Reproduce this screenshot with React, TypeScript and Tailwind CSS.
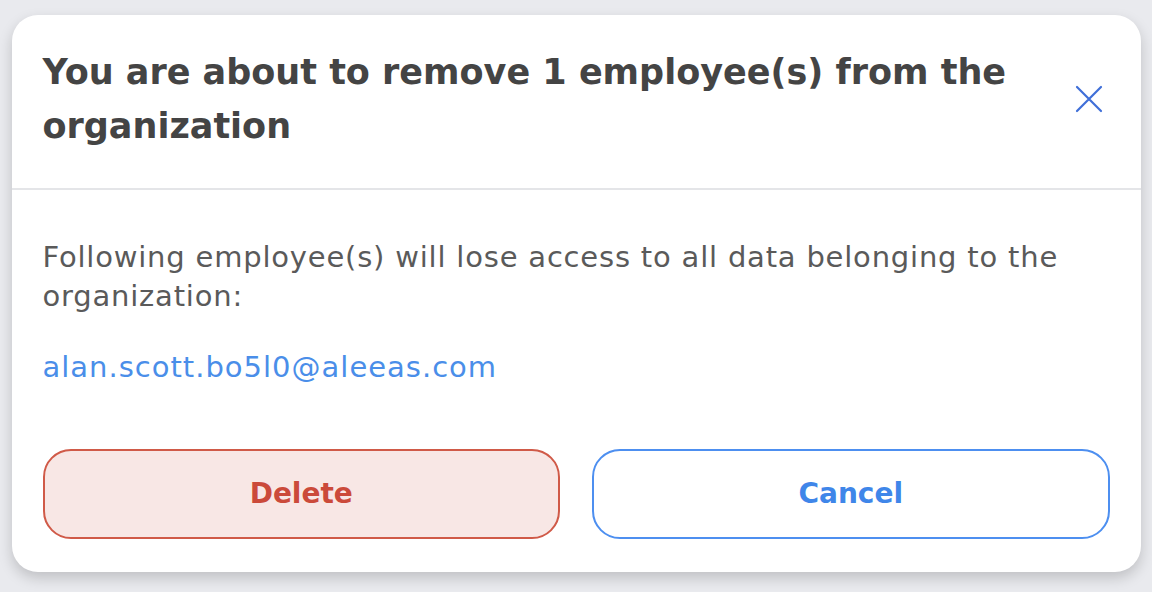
export default function App() {
  return (
    <div
      className="min-h-screen w-full bg-[#e9eaee] pt-[15px] px-[10px] pb-[20px]"
      style={{ fontFamily: '"DejaVu Sans", "Open Sans", sans-serif' }}
    >
      <div className="mx-auto w-[1129px] rounded-[26px] bg-white shadow-[0_6px_14px_rgba(0,0,0,0.18)]">
        {/* Header */}
        <div className="flex items-center justify-between pl-[31px] pr-[38px] pt-[30px] pb-[35px] border-b-2 border-[#e4e5e8]">
          <h2 className="w-[1000px] text-[35px] leading-[54px] font-bold text-[#444444]">
            You are about to remove 1 employee(s) from the organization
          </h2>
          <button aria-label="Close" className="text-[#3f6fd8]">
            <svg width="28" height="28" viewBox="0 0 28 28" fill="none" stroke="currentColor" strokeWidth="2.2" strokeLinecap="round">
              <path d="M2 2L26 26M26 2L2 26" />
            </svg>
          </button>
        </div>

        {/* Body */}
        <div className="px-[31px] pt-[48px] pb-[33px]">
          <p className="text-[29px] leading-[39px] tracking-[0.8px] text-[#5a5a5a]">
            Following employee(s) will lose access to all data belonging to the organization:
          </p>
          <p className="mt-[32px] text-[29px] leading-[39px] tracking-[1px] text-[#4a8ee9]">alan.scott.bo5l0@aleeas.com</p>

          <div className="mt-[62px] grid grid-cols-2 gap-[32px]">
            <button className="h-[90px] rounded-[28px] border-2 border-[#d05a48] bg-[#f8e7e5] text-[28px] font-bold text-[#cb4a3a]">
              Delete
            </button>
            <button className="h-[90px] rounded-[28px] border-2 border-[#4d8ff0] bg-white text-[28px] font-bold text-[#3f86e9]">
              Cancel
            </button>
          </div>
        </div>
      </div>
    </div>
  );
}
